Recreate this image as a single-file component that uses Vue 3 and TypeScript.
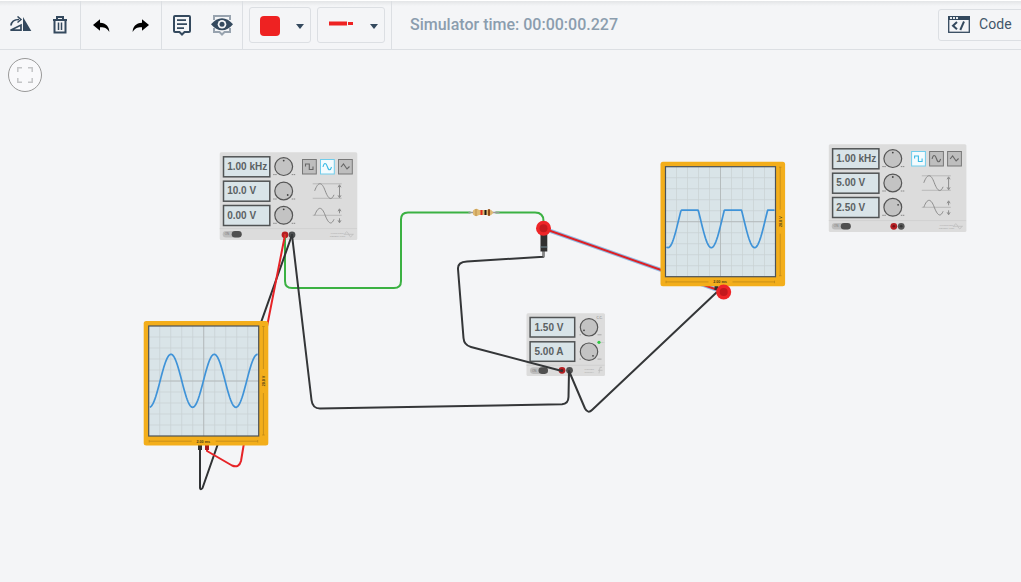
<script setup lang="ts">
interface Generator { x: number; y: number; values: string[]; active: number; dots: number[][] }
interface Scope { x: number; y: number; trace: string; volts: string }

const generators: Generator[] = [
  { x: 219.7, y: 152.3, values: ['1.00 kHz', '10.0 V', '0.00 V'], active: 1, dots: [[0, -6], [4, 4], [0, -6]] },
  { x: 828.8, y: 144.3, values: ['1.00 kHz', '5.00 V', '2.50 V'], active: 0, dots: [[0, -6], [0, -6], [5.3, -2.5]] },
]

const rowY = [14.3, 38.7, 63]
const buttonX = [82.3, 100.3, 118.3]
const glyphs = [
  'M3.500 7.500V5H7.300V10.500H11V7.500',
  'M3 8C4 3.500 6 3.500 7.300 7.500C8.500 11.800 10.500 11.800 11.500 8',
  'M3 8L5.500 5L9 10L11.500 7.500',
]

function tracePath(min: number, max: number, trough: number, period: number, clip: number): string {
  const points: string[] = []
  const mid = (min + max) / 2
  const amp = (max - min) / 2
  for (let x = 6; x <= 114; x += 0.75) {
    const y = mid + amp * Math.cos(((x - trough) / period) * Math.PI * 2)
    points.push(`${x.toFixed(2)} ${Math.max(y, clip).toFixed(2)}`)
  }
  return 'M' + points.join('L')
}

const scopes: Scope[] = [
  { x: 143.7, y: 321, trace: tracePath(33.3, 86.3, 5.6, 43.3, 0), volts: '20.0 V' },
  { x: 660.5, y: 161.7, trace: tracePath(29, 86, 7.5, 43.3, 48.400), volts: '20.0 V' },
]

const gridLines = Array.from({ length: 9 }, (_, i) => 5 + (i + 1) * 11)
const supply = ['1.50 V', '5.00 A']
</script>

<template>
  <div class="simulator">
    <header class="toolbar">
      <div class="group first">
        <button class="tool" aria-label="Mirror">
          <svg width="24" height="18" viewBox="0 0 24 18">
            <path d="M2.500 14.200L13 9V14.200Z" fill="none" stroke="#34495e" stroke-width="1.700" />
            <path d="M15 1V15H23.300Z" fill="#34495e" />
            <path d="M3 9.500C3.500 5 7 3.500 11 3.500" fill="none" stroke="#34495e" stroke-width="1.700" />
            <path d="M9.500 0.500L13 3.500L9.500 6.500" fill="none" stroke="#34495e" stroke-width="1.500" />
          </svg>
        </button>
        <button class="tool trash" aria-label="Delete">
          <svg width="16" height="18" viewBox="0 0 16 18">
            <path d="M1 4H15M5 3.500V1H11V3.500M2.500 4.500V16.500H13.500V4.500" fill="none" stroke="#34495e" stroke-width="2" />
            <path d="M6.500 6.500V14M9.500 6.500V14" stroke="#34495e" stroke-width="1.500" />
          </svg>
        </button>
      </div>
      <div class="group history">
        <button class="tool" aria-label="Undo">
          <svg width="17" height="14" viewBox="0 0 17 14"><path d="M0 6L7 .3V3.800C13 4 16.500 8 16.300 13C14 9.500 12 8.200 7 8.300V11.800Z" /></svg>
        </button>
        <button class="tool" aria-label="Redo">
          <svg width="17" height="14" viewBox="0 0 17 14"><path d="M17 6L10 .3V3.800C4 4 .5 8 .7 13C3 9.500 5 8.200 10 8.300V11.800Z" /></svg>
        </button>
      </div>
      <div class="group notes">
        <button class="tool" aria-label="Notes">
          <svg width="18" height="21" viewBox="0 0 18 21">
            <path d="M2 1H16Q17 1 17 2V16Q17 17 16 17H11.500L9 19.500L6.500 17H2Q1 17 1 16V2Q1 1 2 1Z" fill="none" stroke="#34495e" stroke-width="2" />
            <path d="M4 5.200H13M4 9.200H14M4 13.200H11" stroke="#34495e" stroke-width="1.800" />
          </svg>
        </button>
        <button class="tool" aria-label="Show notes">
          <svg width="22" height="21" viewBox="0 0 22 21">
            <path d="M3 5V1H19V5M3 13V17H8.500L11 19.500L13.500 17H19V13" fill="none" stroke="#98a3af" stroke-width="2" />
            <path d="M0 9.200Q5 3.200 11 3.200T22 9.200Q17 15.200 11 15.200T0 9.200Z" fill="#34495e" />
            <circle cx="11" cy="9.200" r="4.300" fill="#f4f5f7" />
            <circle cx="11" cy="9.200" r="2.500" fill="#34495e" />
          </svg>
        </button>
      </div>
      <div class="group pickers">
        <button class="picker" aria-label="Wire color"><i class="swatch"></i><i class="caret"></i></button>
        <button class="picker wire" aria-label="Wire type">
          <svg width="24" height="5"><path d="M0 .5H18V4.500H0Z M19 1H24V4H19Z" fill="#ee2222" /></svg>
          <i class="caret"></i>
        </button>
      </div>
      <span class="time">Simulator time: 00:00:00.227</span>
      <button class="code">
        <svg width="22" height="17" viewBox="0 0 22 17">
          <rect x=".7" y=".7" width="20.600" height="15.600" fill="none" stroke="#34495e" stroke-width="1.300" />
          <path d="M0 0H22V4H0Z" fill="#34495e" />
          <path d="M2 1H4V3H2Z M5 1H7V3H5Z M8 1H10V3H8Z" fill="#e6eaee" />
          <path d="M9 6L5 9.700L9 13.300" fill="none" stroke="#34495e" stroke-width="2" />
          <path d="M16 5.500L12.300 14" stroke="#34495e" stroke-width="1.900" />
        </svg>
        Code
      </button>
    </header>

    <main class="workspace">
      <svg class="circuit" width="1021" height="532" viewBox="0 50 1021 532">
        <g>
          <circle cx="25" cy="75" r="16.500" fill="#f9f9fb" stroke="#999" />
          <path d="M17.800 72V67.800H22M28 67.800H32.200V72M32.200 78V82.200H28M22 82.200H17.800V78" fill="none" stroke="#c4c5c7" stroke-width="1.500" />
        </g>

        <g v-for="g in generators" :key="g.x" :transform="`translate(${g.x} ${g.y})`">
          <rect width="137.600" height="87.700" rx="1.500" fill="#dcdcdc" />
          <path d="M0 76.300H137.300" stroke="#cecece" stroke-width=".8" />
          <g v-for="(v, i) in g.values" :key="i">
            <rect x="3.800" :y="rowY[i] - 9.800" width="46.300" height="20" fill="#d9e4e8" stroke="#505354" stroke-width="1.500" />
            <text x="7.500" :y="rowY[i] + 3.500" class="reading">{{ v }}</text>
            <circle cx="64" :cy="rowY[i]" r="8.900" fill="#c3c3c3" stroke="#555" stroke-width="1.200" />
            <circle :cx="64 + g.dots[i][0]" :cy="rowY[i] + g.dots[i][1]" r=".9" fill="#444" />
            <path :d="`M53.500 ${rowY[i] + 8}h4M72 ${rowY[i] + 8}h4`" stroke="#888" stroke-width="1" stroke-dasharray="1.5 .5" />
          </g>
          <g v-for="(bx, i) in buttonX" :key="bx" :transform="`translate(${bx} 6.700)`">
            <rect x=".5" y=".5" width="13.800" height="14.500" :fill="i === g.active ? '#f3fbfe' : '#bebebe'" :stroke="i === g.active ? '#71cdec' : '#777'" stroke-width="1" />
            <path :d="glyphs[i]" fill="none" :stroke="i === g.active ? '#3bbbe6' : '#666'" stroke-width="1.100" />
          </g>
          <g fill="none" stroke="#8c8c8c" stroke-width="1">
            <path d="M93 31.500H122M93 46H122" stroke="#b0b0b0" stroke-width=".8" />
            <path d="M95 38.500C98.500 29 102 29 105.500 38.500S112 48 114.300 42.500" />
            <path d="M119.800 33V45M118.300 35L119.800 32.500L121.300 35M118.300 43L119.800 45.500L121.300 43" />
            <path d="M93 63H122" stroke="#b0b0b0" stroke-width=".8" />
            <path d="M95 63C98.500 53.700 102 53.700 105.500 63S112 72.500 114.300 67" />
            <path d="M119.800 57V61M118.300 59L119.800 56.500L121.300 59M119.800 66V70M118.300 68L119.800 70.500L121.300 68" />
          </g>
          <rect x="3" y="78.700" width="19" height="6.600" rx="3.300" fill="#bdbdbd" />
          <rect x="12" y="78.700" width="10" height="6.600" rx="3.300" fill="#505050" />
          <text x="5" y="83.200" class="tiny">ON</text>
          <g v-if="g.x > 300">
            <circle cx="65" cy="82" r="3.400" fill="#b51e22" /><circle cx="72.400" cy="82" r="3.400" fill="#555" />
            <circle cx="65" cy="82" r="1.300" fill="#701417" /><circle cx="72.400" cy="82" r="1.300" fill="#353535" />
          </g>
          <text x="111" y="81.500" class="label">FUNCTION</text><text x="110" y="84.500" class="label">GENERATOR</text>
          <path d="M124 82H134M125 82Q127 77 129 82T133 82" fill="none" stroke="#bbb" stroke-width=".7" />
        </g>

        <g transform="translate(526.500 313.300)">
          <rect width="78.500" height="62.700" rx="1.500" fill="#dcdcdc" />
          <path d="M0 52H78" stroke="#cecece" stroke-width=".8" />
          <g v-for="(v, i) in supply" :key="v">
            <rect x="3.600" :y="4.200 + i * 24.300" width="44.600" height="19.500" fill="#d9e4e8" stroke="#505354" stroke-width="1.500" />
            <text x="8" :y="17.700 + i * 24.300" class="reading">{{ v }}</text>
            <circle cx="62.500" :cy="14 + i * 24.400" r="8.700" fill="#c3c3c3" stroke="#555" stroke-width="1.200" />
            <circle :cx="i ? 66.500 : 57.500" :cy="i ? 42.500 : 17" r=".9" fill="#444" />
            <path :d="`M53 ${21.500 + i * 24.300}h1.500M71 ${21.500 + i * 24.300}h4`" stroke="#aaa" />
          </g>
          <text x="70" y="5.500" class="tiny">C.C.</text>
          <circle cx="72.500" cy="29" r="1.600" fill="#2dcc42" /><text x="74.500" y="29.800" class="label">CV</text>
          <rect x="3.500" y="54" width="18" height="6.600" rx="3.300" fill="#bdbdbd" />
          <rect x="12" y="54" width="9.500" height="6.600" rx="3.300" fill="#505050" />
          <text x="5.500" y="58.500" class="tiny">ON</text>
          <text x="58" y="56.500" class="label">POWER</text><text x="58" y="59.500" class="label">SUPPLY</text>
          <path d="M75.500 54H73.500L72.500 60M71.500 57H76" fill="none" stroke="#bbb" stroke-width=".8" />
          <circle cx="35.500" cy="57" r="3.400" fill="#b51e22" /><circle cx="43" cy="57" r="3.400" fill="#505050" />
          <circle cx="35.500" cy="57" r="1.300" fill="#701417" />
        </g>

        <circle cx="285" cy="234.800" r="3.400" fill="#b51e22" /><circle cx="292" cy="234.800" r="3.400" fill="#4a4d4e" />
        <g fill="none" stroke-width="2" stroke-linecap="round" stroke-linejoin="round">
          <path d="M285 235V281Q285 288 292 288H394Q401 288 401 281V219.500Q401 212.500 408 212.500H470M496 212.500H535Q543.500 212.500 543.500 221V228" stroke="#3bb143" />
          <path d="M292 235L217 446.500L202.500 488Q200.500 490.500 200 488V447" stroke="#303234" />
          <path d="M285 235L243.500 446L241 461Q239 468.500 232 465.500L207 451V447" stroke="#e62327" />
          <path d="M292 235L311.500 400Q312.500 408.500 320 408.500L562 404.300Q568.300 404 568.500 397L569 371L585 408.500Q588 414 592 410L717 292" stroke="#343638" />
          <path d="M543.500 249V256.700L467 261.500Q457.500 262 458 269L463.500 338Q464 345 471 347L562 371" stroke="#343638" />
          <path d="M543.500 228.500L723.500 292" stroke="#92bce4" stroke-width="4" />
          <path d="M543.500 228.500L723.500 292" stroke="#dd2025" />
          <path d="M469 212.500H499" stroke="#999" stroke-width="1.300" />
          <path d="M543.500 250V256" stroke="#888" stroke-width="1.700" />
        </g>

        <g>
          <path d="M473 210.500Q476 207.500 479 210H487Q490 207.500 493.500 212.500Q490 217.500 487 215H479Q476 217.500 473 214.500Z" fill="#dfb972" />
          <path d="M476 209V216" stroke="#c79f5a" stroke-width="1.500" />
          <path d="M481.500 210V215" stroke="#e22820" stroke-width="2" /><path d="M485.500 210V215" stroke="#1c1a18" stroke-width="2" />
          <path d="M489 209.200V215.800" stroke="#8f4a18" stroke-width="2" />
          <rect x="540.500" y="233" width="6.800" height="18.500" fill="#303030" /><path d="M540.500 247H547.300" stroke="#6f8a94" stroke-width="1" />
          <circle cx="543.500" cy="228.300" r="7.500" fill="#ee2528" /><circle cx="543.500" cy="228.300" r="4" fill="#c4191d" />
        </g>

        <rect x="198" y="444" width="4" height="6" fill="#303030" /><rect x="205" y="444" width="4" height="6" fill="#a51b1e" />
        <rect x="714.500" y="285" width="4" height="5" fill="#303030" />
        <g v-for="s in scopes" :key="s.x" :transform="`translate(${s.x} ${s.y})`">
          <rect width="124.600" height="124.500" rx="2.500" fill="#f3ae1b" />
          <rect x="5" y="5" width="110" height="110" fill="#d9e4e8" />
          <g stroke="#c9d1d2" stroke-width=".7">
            <path v-for="n in gridLines" :key="n" :d="`M${n} 5V115M5 ${n}H115`" />
          </g>
          <path d="M60 5V115M5 60H115" stroke="#b2b9ba" stroke-width=".9" />
          <path :d="s.trace" fill="none" stroke="#3f93d8" stroke-width="1.700" stroke-linejoin="round" />
          <rect x="5" y="5" width="110" height="110" fill="none" stroke="#4b5258" stroke-width="1.200" />
          <path d="M5.500 120.200H48M72 120.200H114M5.500 119V121.500M114 119V121.500M119.700 5.500V48M119.700 72V114M118.500 5.500H121M118.500 114H121" fill="none" stroke="#b78418" stroke-width=".7" />
          <text x="59.500" y="121.700" class="scope-label">2.00 ms</text>
          <text transform="translate(121.200 60) rotate(-90)" class="scope-label">{{ s.volts }}</text>
        </g>
        <circle cx="723.700" cy="292" r="7.500" fill="#ee2528" /><circle cx="723.700" cy="292" r="4" fill="#c4191d" />
      </svg>
    </main>
  </div>
</template>

<style>
body { margin: 0; overflow: hidden; }
</style>

<style scoped>
.simulator { width: 1021px; height: 582px; background: #f4f5f7; font-family: Roboto, sans-serif; overflow: hidden; }
.toolbar { height: 50px; box-sizing: border-box; display: flex; padding-top: 1px; border-bottom: 1px solid #dcdfe3; background: linear-gradient(#fff 0 1px, #e3e5e7 1px, #f4f5f7 6px); }
button { border: 0; background: none; padding: 0; font: inherit; display: flex; align-items: center; }
svg { display: block; flex: none; }
.group { box-sizing: border-box; height: 48px; border-right: 1px solid #dcdfe3; display: flex; align-items: center; }
.first { width: 81px; padding-left: 8px; gap: 20px; }
.history { width: 81px; padding-left: 12px; gap: 22px; }
.history svg { margin-top: 2px; }
.notes { width: 81px; padding-left: 11px; gap: 20px; }
.pickers { width: 149px; padding-left: 6px; gap: 6px; }
.picker { box-sizing: border-box; width: 62px; height: 36px; border: 1px solid #dcdfe3; border-radius: 3px; justify-content: space-between; padding: 2px 6px 0 10px; }
.picker.wire { width: 68px; padding: 0 6px 0 11px; }
.picker.wire svg { margin-top: -3px; }
.picker.wire .caret { margin-top: 2px; }
.swatch { width: 20px; height: 20px; border-radius: 4px; background: #ee2222; }
.caret { border: 4px solid transparent; border-top: 5px solid #34495e; border-bottom: 0; }
.time { margin-left: 18px; font-size: 16px; font-weight: 500; line-height: 47px; color: #8b9dae; white-space: nowrap; }
.code { box-sizing: border-box; margin: 8px -8px 0 auto; width: 91px; height: 32px; border: 1px solid #dcdfe3; border-radius: 3px; padding: 0 0 2px 9px; gap: 9px; color: #42566a; font-size: 14px; letter-spacing: .1px; flex: none; }
.workspace { height: 532px; }
.reading { font: bold 10px "Liberation Sans", sans-serif; fill: #5b6163; }
.tiny { font: 3px "Liberation Sans", sans-serif; fill: #777; }
.label { font: 2.5px "Liberation Sans", sans-serif; fill: #aaa; }
.scope-label { font: bold 3.7px "Liberation Sans", sans-serif; fill: #4b3b16; text-anchor: middle; }
</style>
